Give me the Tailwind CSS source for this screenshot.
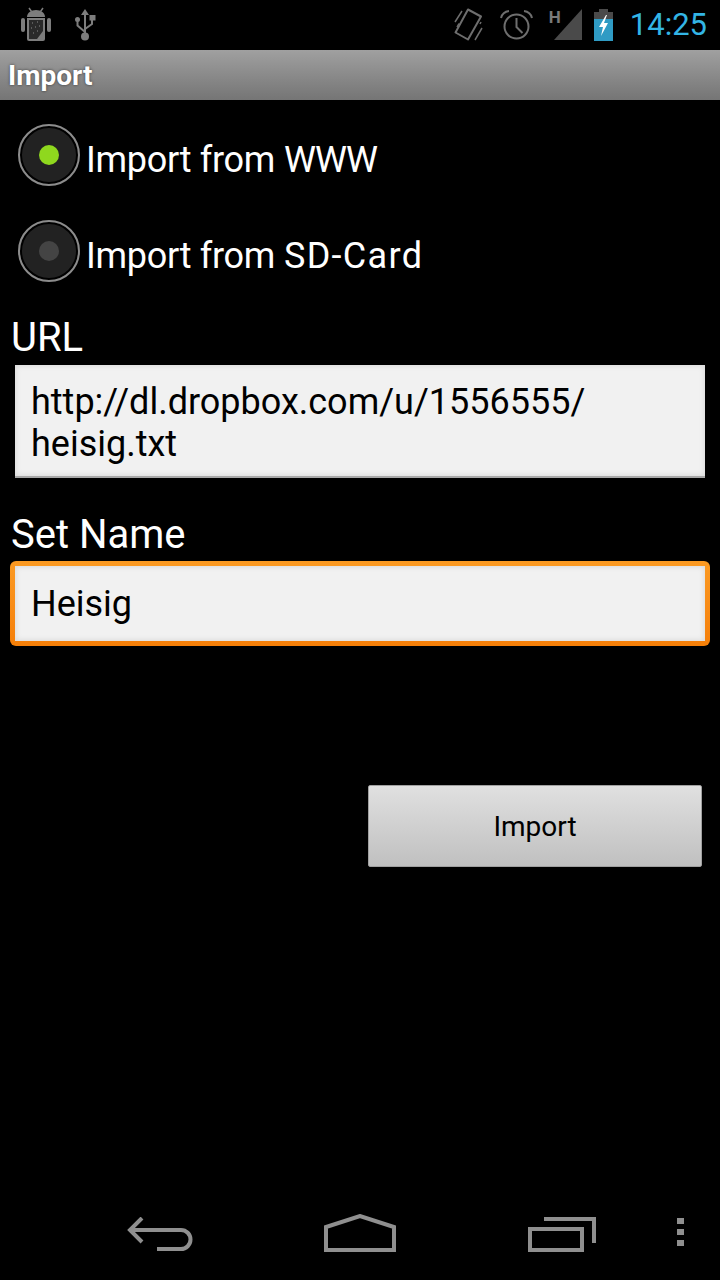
<!DOCTYPE html>
<html lang="en">
<head>
<meta charset="UTF-8">
<meta name="viewport" content="width=device-width, initial-scale=1.0">
<title>Import</title>
<script src="https://cdn.jsdelivr.net/npm/@tailwindcss/browser@4"></script>
</head>
<body class="bg-black font-['Roboto',sans-serif] overflow-hidden">
<div class="w-[720px] h-[1280px] flex flex-col bg-black">

  <!-- status bar -->
  <div class="h-[50px] flex items-center shrink-0">
    <svg class="ml-[21px]" width="30" height="36" viewBox="0 0 30 36">
      <path d="M8 1l2.500 3.500M22 1l-2.500 3.500" stroke="#7d7d7d" stroke-width="1.500"/>
      <path d="M6 10c0-4 4-7 9-7s9 3 9 7z" fill="#7d7d7d"/>
      <rect x="0" y="11" width="4" height="14" rx="2" fill="#7d7d7d"/>
      <rect x="26" y="11" width="4" height="14" rx="2" fill="#7d7d7d"/>
      <path d="M6 11h18v21a2 2 0 0 1-2 2h-14a2 2 0 0 1-2-2z" fill="#7d7d7d"/>
      <path d="M8 13h14v11l-6 8h-8z" fill="#2a2a2a"/>
      <path d="M11 16h1M16 15h1M10 21h1M14 20h1M18 19h1M12 26h1M16 24h1" stroke="#8a8a8a" stroke-width="1"/>
    </svg>
    <svg class="ml-[23px]" width="22" height="32" viewBox="0 0 22 32">
      <path d="M11 4v24M11 23L3.500 16.500V12M11 20l7-5V11" stroke="#7d7d7d" stroke-width="2" fill="none"/>
      <path d="M11 0l4 6H7z" fill="#7d7d7d"/>
      <circle cx="3.500" cy="10.500" r="2.500" fill="#7d7d7d"/>
      <rect x="15.500" y="6" width="6" height="5.500" fill="#7d7d7d"/>
      <circle cx="11" cy="27.500" r="4" fill="#7d7d7d"/>
    </svg>
    <svg class="ml-auto" width="30" height="36" viewBox="0 0 30 36">
      <path d="M14 2.500L27 9.500 14 32.500 1.500 25.500z" fill="none" stroke="#6e6e6e" stroke-width="2" stroke-linejoin="round"/>
      <path d="M1 15L8 4M3 20l2-3.500M21 33l7-12M26 17l1-2" stroke="#6e6e6e" stroke-width="1.500"/>
    </svg>
    <svg class="ml-[16px]" width="33" height="32" viewBox="0 0 33 32">
      <circle cx="16.500" cy="17.500" r="12" fill="none" stroke="#6e6e6e" stroke-width="2"/>
      <path d="M16.500 9v9l6 6" fill="none" stroke="#6e6e6e" stroke-width="2"/>
      <path d="M1 9c1-4 4-6.500 8-7M32 9c-1-4-4-6.500-8-7" fill="none" stroke="#6e6e6e" stroke-width="2"/>
    </svg>
    <div class="relative ml-[16px] w-[33px] h-[32px]">
      <svg class="absolute left-0 top-0" width="33" height="32" viewBox="0 0 33 32">
        <path d="M33 0v31H5z" fill="#4a4a4a"/>
      </svg>
      <span class="absolute left-0 top-[0px] text-[17px] leading-[16px] font-bold text-[#7a7a7a]">H</span>
    </div>
    <svg class="ml-[11px]" width="21" height="32" viewBox="0 0 21 32">
      <path d="M6 0h9v3h5v7H1V3h5z" fill="#4a4a4a"/>
      <rect x="1" y="10" width="19" height="22" fill="#2f9bc4"/>
      <path d="M13 6L6 18h4l-2 9 7-13h-4l3-8z" fill="#fff"/>
    </svg>
    <span class="ml-[16px] mr-[13px] text-[31px] leading-[36px] font-normal text-[#33b5e5]">14:25</span>
  </div>

  <!-- title -->
  <div class="h-[50px] shrink-0 flex items-center pl-[8px] pt-[2px] bg-gradient-to-b from-[#a0a0a0] to-[#757575]">
    <span class="text-[28px] font-bold text-white [text-shadow:0_0_3px_rgba(0,0,0,0.6)]">Import</span>
  </div>

  <!-- form -->
  <div class="flex-1 flex flex-col pt-[7px]">
    <div class="h-[96px] flex items-center pl-[18px] gap-[6px]">
      <div class="w-[62px] h-[62px] rounded-full bg-[#222] border-[2px] border-[#8c8c8c] ring-2 ring-inset ring-black flex items-center justify-center">
        <div class="w-[20px] h-[20px] rounded-full bg-[#8fd81e]"></div>
      </div>
      <span class="text-[36px] leading-[50px] pt-[10px] text-white"><span class="tracking-[-0.3px]">Import from</span> <span class="tracking-[-1px]">WWW</span></span>
    </div>
    <div class="h-[96px] flex items-center pl-[18px] gap-[6px]">
      <div class="w-[62px] h-[62px] rounded-full bg-[#222] border-[2px] border-[#8c8c8c] ring-2 ring-inset ring-black flex items-center justify-center">
        <div class="w-[20px] h-[20px] rounded-full bg-[#444]"></div>
      </div>
      <span class="text-[36px] leading-[50px] pt-[10px] text-white"><span class="tracking-[-0.3px]">Import from</span> <span class="tracking-[1.3px]">SD-Card</span></span>
    </div>

    <div class="pl-[11px] pt-[15px] text-[40px] leading-[48px] text-white">URL</div>
    <div class="ml-[15px] mt-[3px] w-[690px] h-[113px] bg-[#f1f1f1] border-b-2 border-[#a8a8a8] shadow-[inset_0_0_6px_rgba(0,0,0,0.12)] pl-[16px] pt-[16px] text-[36px] leading-[42px] text-black">http://dl.dropbox.com/u/1556555/<br>heisig.txt</div>

    <div class="pl-[11px] pt-[33px] text-[40px] leading-[48px] text-white">Set Name</div>
    <div class="ml-[10px] mt-[2px] w-[700px] h-[85px] rounded-[6px] bg-gradient-to-b from-[#fb9a22] to-[#f57f08] p-[5px]">
      <div class="h-full bg-[#f1f1f1] shadow-[inset_0_0_6px_rgba(0,0,0,0.12)] pl-[16px] flex items-center text-[36px] text-black">Heisig</div>
    </div>

    <div class="ml-[368px] mt-[139px] w-[334px] h-[82px] pt-[2px] rounded-[2px] border border-[#a0a0a0] bg-gradient-to-b from-[#e0e0e0] to-[#c0c0c0] flex items-center justify-center text-[28px] text-black">Import</div>
  </div>

  <!-- nav bar -->
  <div class="h-[96px] shrink-0 flex items-start pt-[30px]">
    <svg class="ml-[127px] mt-[3px]" width="66" height="34" viewBox="0 0 66 34">
      <path d="M15 1L3 13l12 12M3 13h51a9 9 0 0 1 0 19H30" fill="none" stroke="#8f8f8f" stroke-width="4"/>
    </svg>
    <svg class="ml-[131px]" width="72" height="38" viewBox="0 0 72 38">
      <path d="M2 36V13L36 2l34 11v23z" fill="none" stroke="#8f8f8f" stroke-width="4"/>
    </svg>
    <svg class="ml-[132px] mt-[3px]" width="68" height="35" viewBox="0 0 68 35">
      <rect x="2" y="12" width="52" height="21" fill="none" stroke="#8f8f8f" stroke-width="4"/>
      <path d="M16 2h50v24" fill="none" stroke="#8f8f8f" stroke-width="4"/>
    </svg>
    <div class="ml-[81px] mt-[4px] flex flex-col gap-[5px]">
      <div class="w-[7px] h-[6px] bg-[#8f8f8f]"></div>
      <div class="w-[7px] h-[6px] bg-[#8f8f8f]"></div>
      <div class="w-[7px] h-[6px] bg-[#8f8f8f]"></div>
    </div>
  </div>
</div>
</body>
</html>
